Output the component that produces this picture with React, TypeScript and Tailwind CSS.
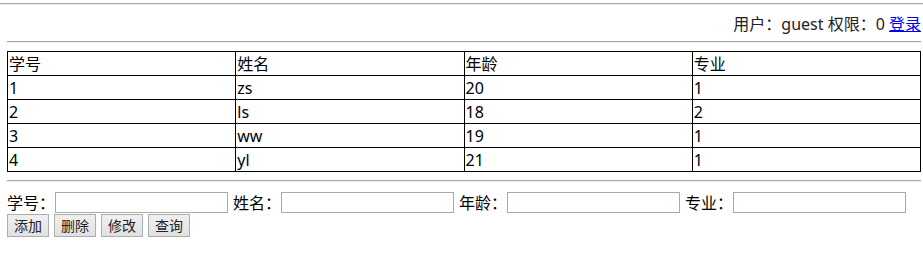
import React from "react";

const rows = [
  ["学号", "姓名", "年龄", "专业"],
  ["1", "zs", "20", "1"],
  ["2", "ls", "18", "2"],
  ["3", "ww", "19", "1"],
  ["4", "yl", "21", "1"],
];

const fields = ["学号", "姓名", "年龄", "专业"];
const buttons = ["添加", "删除", "修改", "查询"];

export default function App() {
  return (
    <div
      className="w-[923px] h-[278px] bg-white text-black text-[16px]"
      style={{ fontFamily: '"Noto Sans", "Noto Sans CJK SC", sans-serif' }}
    >
      <div className="pt-[3px]">
        <div className="h-[2px] border-t border-[#a9a9a9] border-b border-b-[#eeeeee]" />
      </div>
      <div className="pl-[7px] pr-[2px]">
        <div className="h-[36px] flex items-center justify-end pt-[2px] leading-[22px] text-[#222]">
          <span>用户：guest 权限：0&nbsp;</span>
          <a href="#" className="text-[#0000ee] underline">
            登录
          </a>
        </div>
        <div className="h-[2px] border-t border-[#a9a9a9] border-b border-b-[#eeeeee]" />
        <table className="mt-[8px] w-full border-collapse table-fixed">
          <tbody>
            {rows.map((r, i) => (
              <tr key={i} className="h-[24px]">
                {r.map((c, j) => (
                  <td
                    key={j}
                    className="border border-black p-0 pl-[1px] leading-[22px] align-middle"
                  >
                    {c}
                  </td>
                ))}
              </tr>
            ))}
          </tbody>
        </table>
        <div className="mt-[8px] h-[2px] border-t border-[#a9a9a9] border-b border-b-[#eeeeee]" />
        <div className="mt-[10px] flex items-center h-[21px] leading-[22px]">
          {fields.map((f) => (
            <div key={f} className="flex items-center shrink-0 mr-[5px]">
              <span className="w-[48px] shrink-0 whitespace-nowrap">{f}：</span>
              <input
                type="text"
                className="w-[173px] h-[21px] shrink-0 border border-[#a9a9a9] bg-white outline-none"
              />
            </div>
          ))}
        </div>
        <div className="mt-[1px] flex gap-[5px]">
          {buttons.map((b) => (
            <button
              key={b}
              className="w-[42px] h-[23px] shrink-0 border border-[#adadad] bg-gradient-to-b from-[#f0f0f0] to-[#e1e1e1] text-[14px] leading-[20px] text-[#222] flex items-center justify-center whitespace-nowrap"
            >
              {b}
            </button>
          ))}
        </div>
      </div>
    </div>
  );
}
